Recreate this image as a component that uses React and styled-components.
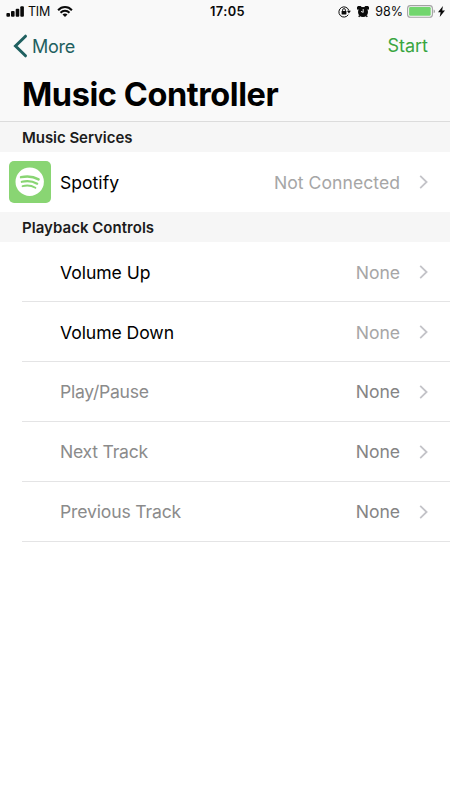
import React from 'react'
import styled, { createGlobalStyle } from 'styled-components'

const GlobalStyle = createGlobalStyle`
* {
  box-sizing: border-box;
}
body {
  margin: 0;
  background: #fff;
  font-family: Inter, "Liberation Sans", sans-serif;
  -webkit-font-smoothing: antialiased;
}
`;

const Screen = styled.div`
display: flex;
flex-direction: column;
width: 450px;
height: 800px;
overflow: hidden;
background: #fff;
`;

const Header = styled.header`
display: flex;
flex-direction: column;
height: 122px;
background: #f9f9f9;
border-bottom: 1px solid #dcdcdc;
`;

const StatusBar = styled.div`
display: grid;
grid-template-columns: 1fr auto 1fr;
align-items: center;
height: 22px;
padding: 0 5px 0 6px;
color: #0a0a0a;
`;

const StatusGroup = styled.div`
display: flex;
align-items: center;
gap: ${props => props.$gap || 0}px;
justify-content: ${props => props.$end ? 'flex-end' : 'flex-start'};
svg {
  display: block;
  flex: none;
}
`;

const StatusText = styled.span`
font-size: 12.5px;
line-height: 22px;
padding-top: 1px;
letter-spacing: ${props => props.$spacing || 0}px;
margin: ${props => props.$margin || 0};
white-space: nowrap;
`;

const Clock = styled(StatusText)`
font-size: 12.8px;
font-weight: 600;
letter-spacing: 0.4px;
padding-left: 4px;
`;

const NavBar = styled.nav`
display: flex;
align-items: center;
justify-content: space-between;
height: 48px;
padding: 0 22px 0 13px;
`;

const BackButton = styled.a`
display: flex;
align-items: center;
gap: 4px;
color: #1f6060;
font-size: 18px;
letter-spacing: -0.25px;
svg {
  display: block;
}
`;

const StartButton = styled.a`
color: #3aa540;
font-size: 18px;
padding-bottom: 1px;
`;

const Title = styled.h1`
margin: 0;
padding: 0 22px;
font-size: 32.5px;
font-weight: 700;
line-height: 49px;
letter-spacing: -0.42px;
color: #000;
`;

const SectionTitle = styled.h2`
margin: 0;
height: 30px;
padding: 1px 22px 0;
background: #f6f6f6;
color: #1c1c1c;
font-size: 15px;
font-weight: 600;
line-height: 30px;
letter-spacing: ${props => props.$spacing || 0}px;
`;

const Row = styled.div`
display: flex;
align-items: center;
height: 60px;
margin-left: ${props => props.$service ? 9 : 22}px;
padding: 0 21px 0 ${props => props.$service ? 0 : 38}px;
border-bottom: ${props => props.$service ? 'none' : '1px solid #e4e4e5'};
font-size: 17.6px;
svg {
  display: block;
  flex: none;
}
`;

const Label = styled.span`
flex: 1;
padding-top: ${props => props.$service || props.$dim ? 0 : 2}px;
margin-left: ${props => props.$service ? 9 : 0}px;
color: ${props => props.$dim ? '#8b8b8b' : '#000'};
letter-spacing: ${props => props.$spacing || 0}px;
white-space: nowrap;
`;

const Value = styled.span`
padding-top: ${props => props.$service || props.$dim ? 0 : 2}px;
margin-right: 19px;
color: ${props => props.$dim ? '#858585' : '#a6a6a6'};
letter-spacing: ${props => props.$service ? 0.03 : -0.07}px;
`;

const SpotifyTile = styled.div`
display: flex;
align-items: center;
justify-content: center;
width: 42px;
height: 42px;
border-radius: 5px;
background: #89d573;
`;

function Signal() {
  return (
    <svg width="18" height="11" viewBox="0 0 18 11" fill="currentColor">
      <rect x="0.4" y="6.9" width="3.6" height="3.9" rx="1" />
      <rect x="5" y="5" width="3.6" height="5.8" rx="1" />
      <rect x="9.7" y="2.8" width="3.6" height="8" rx="1" />
      <rect x="14.3" y="0.2" width="3.6" height="10.6" rx="1" />
    </svg>
  )
}

function Wifi() {
  return (
    <svg width="16" height="11" viewBox="0 0 16 11" fill="none" stroke="currentColor" strokeWidth="2">
      <path d="M1.1 4.2C5 0 11 0 14.9 4.2" />
      <path d="M3.5 6.7C6.1 4.1 9.9 4.1 12.5 6.7" />
      <path d="M8 11 5.5 8.5C7 7.2 9 7.2 10.5 8.5Z" fill="currentColor" stroke="none" />
    </svg>
  )
}

function RotationLock() {
  return (
    <svg width="13" height="12" viewBox="0 0 13 12" fill="none" stroke="currentColor">
      <path d="M10.3 8.7A5.1 5.1 0 1 1 10.9 4.6" strokeWidth="1" />
      <path d="M8.9 4.8h4l-2 2.8z" fill="currentColor" stroke="none" />
      <rect x="3.6" y="5" width="4.8" height="3.5" rx="0.4" fill="currentColor" stroke="none" />
      <path d="M4.6 5.3V4a1.4 1.4 0 0 1 2.8 0v1.3" strokeWidth="0.9" />
    </svg>
  )
}

function Alarm() {
  return (
    <svg width="12" height="12" viewBox="0 0 12 12">
      <circle cx="6" cy="6.1" r="5" fill="currentColor" />
      <path d="M0.5 3.8A2.4 2.4 0 0 1 4.2 0.5L6 3ZM7.8 0.5A2.4 2.4 0 0 1 11.5 3.8L6 3Z" fill="currentColor" />
      <path d="M2.6 9.6 1.8 10.9M9.4 9.6l0.8 1.3" stroke="currentColor" strokeWidth="1.4" />
      <path d="M6.2 3v3.4L4 5.4" fill="none" stroke="#f9f9f9" strokeWidth="0.9" />
    </svg>
  )
}

function Battery() {
  return (
    <svg width="29" height="13" viewBox="0 0 29 13">
      <rect x="0.6" y="0.6" width="24.8" height="11.6" rx="2.8" fill="none" stroke="#a2a2a2" strokeWidth="1.1" />
      <rect x="2.1" y="2.1" width="21.6" height="8.6" rx="1.2" fill="#72d66e" />
      <path d="M26.6 4.4c1.8.4 1.8 3.4 0 3.8z" fill="#a2a2a2" />
    </svg>
  )
}

function Bolt() {
  return (
    <svg width="7" height="11" viewBox="0 0 7 11" fill="currentColor">
      <path d="M4.9 0 0 6.2h2.6L1.7 11 7 4.4H4.2z" />
    </svg>
  )
}

function SpotifyMark() {
  return (
    <svg width="30" height="30" viewBox="0 0 30 30" fill="none" stroke="#89d573" strokeLinecap="round">
      <circle cx="14.7" cy="14.8" r="14.2" fill="#fff" stroke="none" />
      <path d="M6 10.2C12.2 8.8 18.6 9.5 23.6 12.4" strokeWidth="2.4" />
      <path d="M6.8 14.8C12.3 13.5 17.8 14.2 22.2 16.7" strokeWidth="2.2" />
      <path d="M7.6 19.2C12.2 18 16.6 18.6 20.4 20.8" strokeWidth="1.9" />
    </svg>
  )
}

function Chevron() {
  return (
    <svg width="10" height="14" viewBox="0 0 10 14" fill="none" stroke="#c3c3c8" strokeWidth="1.8">
      <path d="M1.2 0.8 7.6 7 1.2 13.2" />
    </svg>
  )
}

const controls = [
  { name: 'Volume Up', spacing: -0.05 },
  { name: 'Volume Down', spacing: -0.07 },
  { name: 'Play/Pause', spacing: -0.28, dim: true },
  { name: 'Next Track', spacing: -0.25, dim: true },
  { name: 'Previous Track', spacing: -0.17, dim: true },
]

function App() {
  return (
    <>
      <GlobalStyle />
      <Screen>
        <Header>
          <StatusBar>
            <StatusGroup>
              <Signal />
              <StatusText $margin="0 7px 0 4px" $spacing={-0.2}>TIM</StatusText>
              <Wifi />
            </StatusGroup>
            <Clock>17:05</Clock>
            <StatusGroup $end $gap={2}>
              <StatusGroup $gap={6}>
                <RotationLock />
                <Alarm />
                <StatusText $margin="0 2px 0 0">98%</StatusText>
              </StatusGroup>
              <Battery />
              <Bolt />
            </StatusGroup>
          </StatusBar>
          <NavBar>
            <BackButton>
              <svg width="15" height="24" viewBox="0 0 15 24" fill="none" stroke="currentColor" strokeWidth="3" strokeLinecap="round">
                <path d="M12.5 2.2 2.5 12l10 9.8" />
              </svg>
              More
            </BackButton>
            <StartButton>Start</StartButton>
          </NavBar>
          <Title>Music Controller</Title>
        </Header>

        <SectionTitle $spacing={-0.05}>Music Services</SectionTitle>
        <Row $service>
          <SpotifyTile>
            <SpotifyMark />
          </SpotifyTile>
          <Label $service>Spotify</Label>
          <Value $service>Not Connected</Value>
          <Chevron />
        </Row>

        <SectionTitle $spacing={0.03}>Playback Controls</SectionTitle>
        {controls.map(control => (
          <Row key={control.name}>
            <Label $dim={control.dim} $spacing={control.spacing}>{control.name}</Label>
            <Value $dim={control.dim}>None</Value>
            <Chevron />
          </Row>
        ))}
      </Screen>
    </>
  )
}

export default App
